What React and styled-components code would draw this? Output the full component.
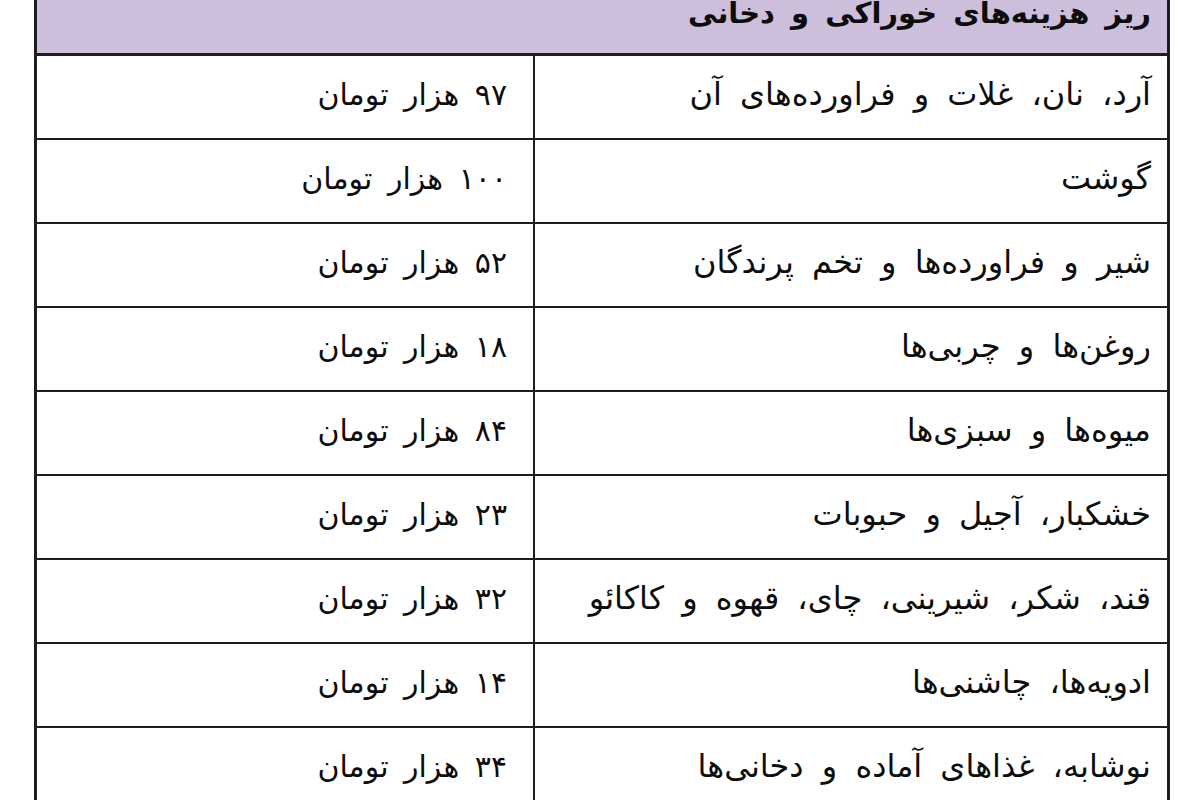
import React from 'react';
import styled, { createGlobalStyle } from 'styled-components';

const rows = [
  ['آرد، نان، غلات و فراورده‌های آن', '۹۷ هزار تومان'],
  ['گوشت', '۱۰۰ هزار تومان'],
  ['شیر و فراورده‌ها و تخم پرندگان', '۵۲ هزار تومان'],
  ['روغن‌ها و چربی‌ها', '۱۸ هزار تومان'],
  ['میوه‌ها و سبزی‌ها', '۸۴  هزار تومان'],
  ['خشکبار، آجیل و حبوبات', '۲۳ هزار تومان'],
  ['قند، شکر، شیرینی، چای، قهوه و کاکائو', '۳۲ هزار تومان'],
  ['ادویه‌ها، چاشنی‌ها', '۱۴ هزار تومان'],
  ['نوشابه، غذاهای آماده و دخانی‌ها', '۳۴ هزار تومان'],
];

const GlobalStyle = createGlobalStyle`
  html, body {
    margin: 0;
    padding: 0;
    background: #ffffff;
    overflow: hidden;
  }
  * {
    box-sizing: border-box;
  }
  body {
    font-family: 'DejaVu Sans', 'Noto Sans', sans-serif;
  }
`;

const Page = styled.div`
  width: 1200px;
  height: 800px;
  overflow: hidden;
  background: #fff;
`;

const Table = styled.div`
  direction: rtl;
  margin: -14px 0 0 34px;
  width: 1136px;
  border-left: 3px solid #1e1e1e;
  border-right: 3px solid #1e1e1e;
  color: #0d0d0d;
`;

const Header = styled.div`
  height: 70px;
  background: #cdbfdc;
  border-bottom: 3px solid #1e1e1e;
  padding: 7px 16px 0 0;
  font-size: 29px;
  font-weight: bold;
  line-height: 40px;
  word-spacing: 6px;
  white-space: nowrap;
`;

const Row = styled.div`
  display: grid;
  grid-template-columns: 634px 1fr;
  height: 84px;
  border-bottom: 2px solid #1e1e1e;
`;

const Cell = styled.div`
  display: flex;
  align-items: center;
  padding: 0 ${(p) => (p.$label ? '16px' : '26px')} 6px 0;
  border-left: ${(p) => (p.$label ? '2px solid #1e1e1e' : 'none')};
  font-size: ${(p) => (p.$label ? '32px' : '30px')};
  word-spacing: ${(p) => (p.$label ? '8px' : '6px')};
  white-space: nowrap;
`;

export default function App() {
  return (
    <Page>
      <GlobalStyle />
      <Table>
        <Header>ریز هزینه‌های  خوراکی و دخانی</Header>
        {rows.map(([label, value]) => (
          <Row key={label}>
            <Cell $label>{label}</Cell>
            <Cell>{value}</Cell>
          </Row>
        ))}
      </Table>
    </Page>
  );
}
